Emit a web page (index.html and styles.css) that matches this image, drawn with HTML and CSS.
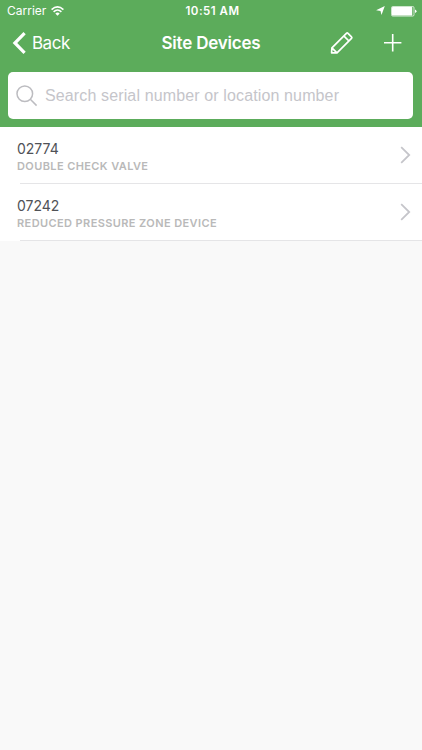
FILE: index.html
```html
<!DOCTYPE html>
<html lang="en">
<head>
<meta charset="utf-8">
<title>Site Devices</title>
<link rel="stylesheet" href="styles.css">
</head>
<body>
<header class="header">
  <div class="status">
    <div class="carrier"><span>Carrier</span>
      <svg width="13" height="10" viewBox="0 0 13 10" fill="none" stroke="#fff" stroke-width="1.6"><path d="M.6 3.6Q6.5-1.8 12.4 3.6M2.6 5.8Q6.5 2.2 10.4 5.8"/><path d="M4.3 7.4Q6.5 5.5 8.7 7.4L6.5 9.7Z" fill="#fff" stroke="none"/></svg>
    </div>
    <div class="clock">10:51 AM</div>
    <div class="power">
      <svg width="9" height="10" viewBox="0 0 9 10" fill="#fff"><path d="M8.8 0 5.5 8.9 4.5 4.9.1 4.2Z"/></svg>
      <svg width="26" height="11" viewBox="0 0 26 11" fill="#fff"><rect x=".5" y=".5" width="22.5" height="9.6" rx="1.3" fill="none" stroke="#fff" stroke-width=".7"/><rect x="1" y="1" width="20.2" height="8.6" rx=".5"/><path d="M24 3.5Q25.5 4 25.5 5.3T24 7.1Z"/></svg>
    </div>
  </div>
  <nav class="nav">
    <div class="back">
      <svg width="14" height="22" viewBox="0 0 14 22" fill="none" stroke="#fff" stroke-width="3.2"><path d="M12.6 1.2 2.9 11 12.6 20.8"/></svg>
      <span>Back</span>
    </div>
    <h1 class="title">Site Devices</h1>
    <div class="actions">
      <svg width="24" height="24" viewBox="0 0 24 24" fill="none" stroke="#fff" stroke-width="1.7" stroke-linejoin="round"><path d="M1.6 21.8 1.9 16.8 16.4 2.3Q17.2 1.5 18 2.3L21.5 5.8Q22.3 6.6 21.5 7.4L7 21.9ZM13.8 4.9 18.9 10M1.9 16.8 7 21.9"/></svg>
      <svg width="18" height="18" viewBox="0 0 18 18" stroke="#fff" stroke-width="1.6"><path d="M8.7 0V17.4M0 8.7H17.4"/></svg>
    </div>
  </nav>
  <div class="search">
    <svg width="22" height="22" viewBox="0 0 22 22" fill="none" stroke="#bcbcc0" stroke-width="1.5"><circle cx="8.8" cy="8.8" r="7.8"/><path d="M14.3 14.3 20.6 20.6"/></svg>
    <span>Search serial number or location number</span>
  </div>
</header>
<main>
  <div class="row">
    <div><div class="serial">02774</div><div class="kind">DOUBLE CHECK VALVE</div></div>
    <svg width="11" height="18" viewBox="0 0 11 18" fill="none" stroke="#c5c5ca" stroke-width="1.8"><path d="M1.2 1.2 9.2 9 1.2 16.8"/></svg>
  </div>
  <div class="row">
    <div><div class="serial">07242</div><div class="kind">REDUCED PRESSURE ZONE DEVICE</div></div>
    <svg width="11" height="18" viewBox="0 0 11 18" fill="none" stroke="#c5c5ca" stroke-width="1.8"><path d="M1.2 1.2 9.2 9 1.2 16.8"/></svg>
  </div>
</main>
</body>
</html>
```
FILE: styles.css
```css
* { box-sizing: border-box; }
body { margin: 0; background: #f9f9f9; font-family: Inter, "Liberation Sans", sans-serif; }
svg { display: block; flex: none; }
span, .title, .clock, .serial, .kind { white-space: nowrap; }
.header { height: 126.6px; background: #5cac5b; color: #fff; }
.status { height: 22px; display: grid; grid-template-columns: 1fr auto 1fr; align-items: center; padding: 0 5px 0 7px; font-size: 12px; line-height: 22px; }
.carrier { display: flex; align-items: center; gap: 5px; letter-spacing: 0; }
.clock { font-weight: 600; font-size: 11.5px; letter-spacing: .5px; padding-left: 1px; }
.power { display: flex; justify-content: flex-end; align-items: center; gap: 6px; }
.nav { height: 42px; display: grid; grid-template-columns: 1fr auto 1fr; align-items: center; padding: 0 12px; }
.back { display: flex; align-items: center; gap: 6px; font-size: 17px; letter-spacing: -.5px; }
.title { margin: 0; font-size: 17px; line-height: 22px; font-weight: 600; letter-spacing: -.2px; }
.actions { display: flex; justify-content: flex-end; align-items: center; gap: 30px; padding-right: 8px; }
.search { height: 47px; margin: 8.4px 9px 0 8px; padding: 0 8px; border-radius: 5px; background: #fff; display: flex; align-items: center; gap: 7px; color: #c5c5ca; font: 16px "Liberation Sans", sans-serif; letter-spacing: .13px; }
.row { height: 57px; padding: 0 11px 0 17px; display: flex; align-items: center; justify-content: space-between; background: linear-gradient(#e5e5e7, #e5e5e7) 20px 100% / 100% 1px no-repeat #fff; }
.serial { color: #505257; font-size: 14px; line-height: 18px; margin-top: 5px; }
.kind { color: #b9b9b9; font-size: 11px; line-height: 17px; font-weight: 600; letter-spacing: .4px; }
```
